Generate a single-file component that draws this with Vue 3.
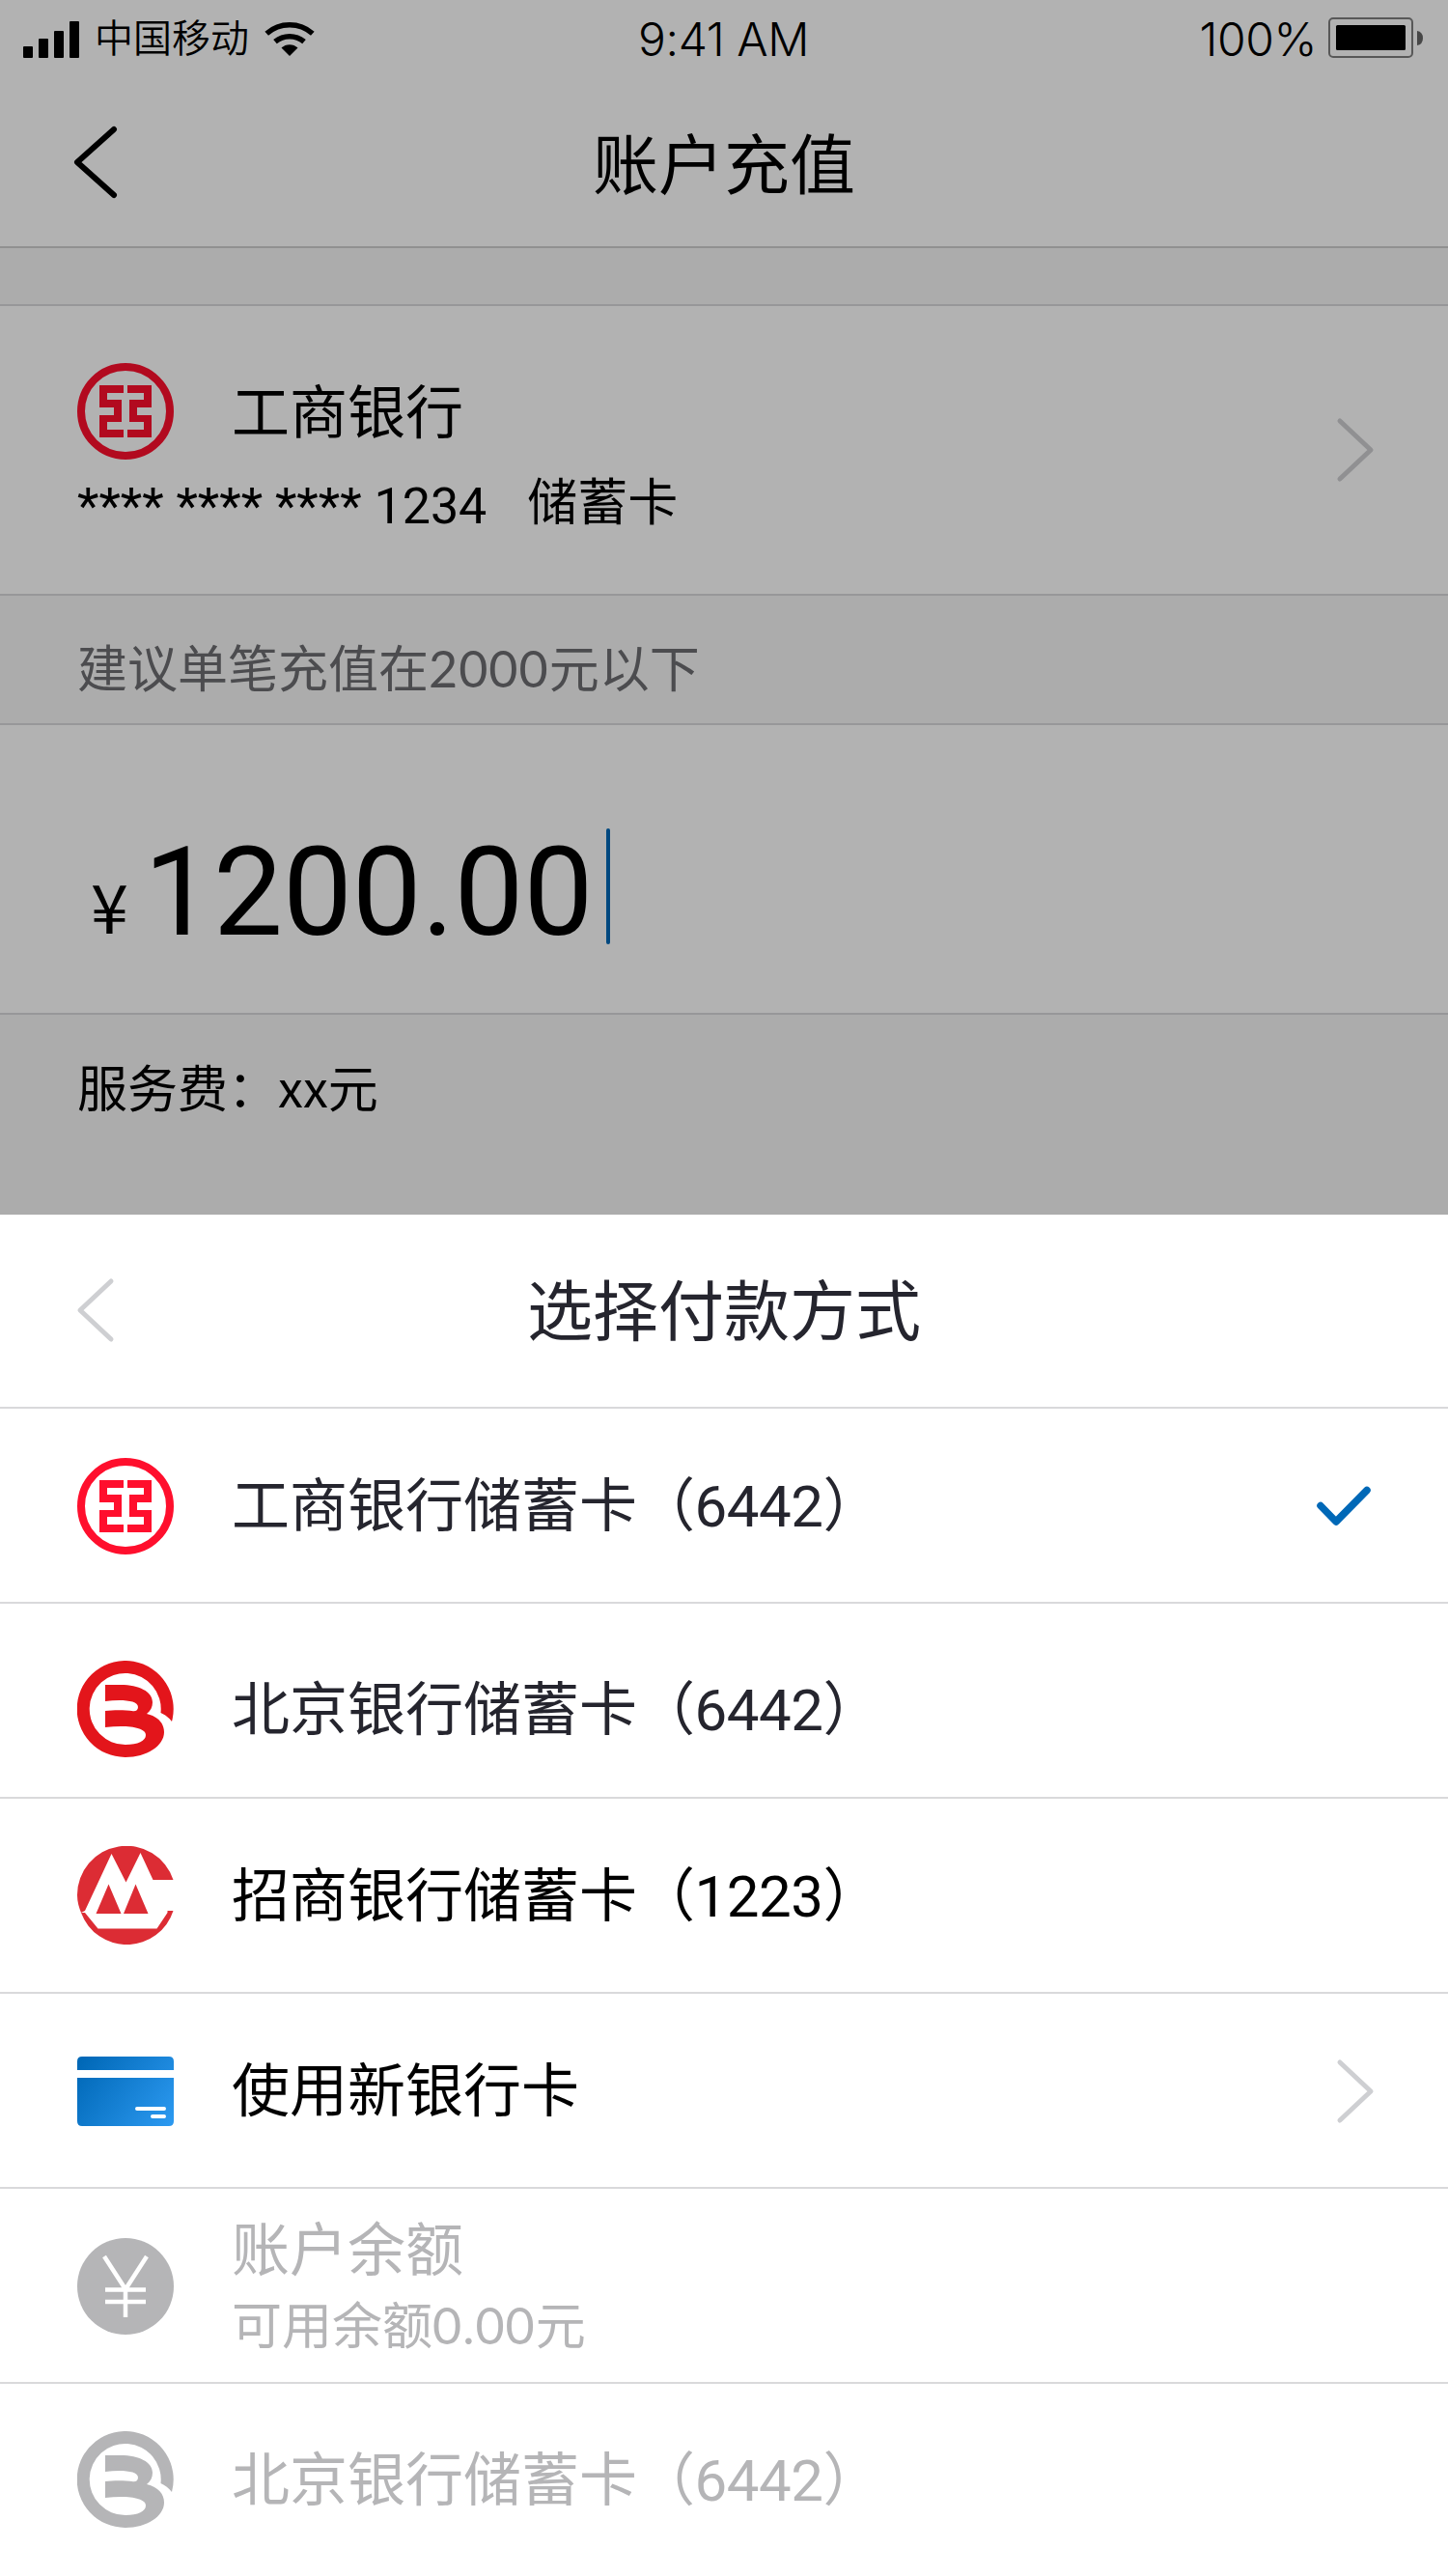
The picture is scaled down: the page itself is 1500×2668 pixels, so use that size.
<script setup>
const cards = [
  { id: 1, logo: 'icbc', name: '工商银行储蓄卡', tail: '6442', selected: true },
  { id: 2, logo: 'bob', name: '北京银行储蓄卡', tail: '6442', shifted: true },
  { id: 3, logo: 'cmb', name: '招商银行储蓄卡', tail: '1223', dark: true },
  { id: 4, logo: 'new', name: '使用新银行卡', dark: true, more: true },
  { id: 5, logo: 'balance', name: '账户余额', disabled: true, balance: '0.00' },
  { id: 6, logo: 'bob', name: '北京银行储蓄卡', tail: '6442', disabled: true },
]
</script>

<template>
  <div class="screen">
    <svg width="0" height="0" class="defs" aria-hidden="true">
      <symbol id="icbc" viewBox="0 0 100 100">
        <circle cx="50" cy="50" r="46" fill="none" stroke="currentColor" stroke-width="8" />
        <path fill="currentColor" d="M23 23H48V31H31V38H46V61H31V69H48V77H23V54H38V46H23ZM52 23H77V46H62V54H77V77H52V69H69V61H54V38H69V31H52Z" />
      </symbol>
      <symbol id="bob" viewBox="0 0 100 100">
        <path fill="currentColor" d="M98 63A50 50 0 1 0 50 100C72 100 90 88 90 74C90 65 84 58 72 55C76 52 78 48 78 43C78 32 64 25 45 25H29V42C46 40 63 41 63 48C63 51 61 52.500 58 52.300C50 51 38 51 29 52V69C50 66.500 71 68.500 71 77C71 83 63 87 50 87A37 37 0 1 1 86.500 54C91 56 95 59 98 63Z" />
      </symbol>
      <symbol id="cmb" viewBox="0 0 100 102">
        <path fill="currentColor" d="M99.500 35A51 51 0 0 0 0 51C0 58 2 64 4 69L8 67 35.500 8 50.500 37.500 65.500 7 78.500 35ZM32.500 39.500 19.500 70H45.500ZM60.500 39.500 48 70H73.500ZM8 69 4 69A50.500 50.500 0 0 0 99.500 67H93.500V69L82.500 85.500H21.500Z" />
      </symbol>
      <symbol id="new" viewBox="0 0 100 100">
        <defs>
          <linearGradient id="card-blue" gradientUnits="userSpaceOnUse" x1="4" y1="18" x2="96" y2="84">
            <stop offset="0" stop-color="#0068b7" />
            <stop offset="1" stop-color="#2b98ef" />
          </linearGradient>
        </defs>
        <path fill="url(#card-blue)" d="M0 28V19Q0 14 5 14H95Q100 14 100 19V28ZM0 36H100V81Q100 86 95 86H5Q0 86 0 81Z" />
        <path stroke="#fff" stroke-width="4" stroke-linecap="round" d="M62 68H90M78 76H90" />
      </symbol>
      <symbol id="balance" viewBox="0 0 100 100">
        <circle cx="50" cy="50" r="50" fill="currentColor" />
        <path fill="none" stroke="#fff" stroke-width="4.500" d="M28 19 50 53 72 19M50 51V82M29 53.500H71M29 66H71" />
      </symbol>
      <symbol id="chevron" viewBox="0 0 40 68">
        <path fill="none" stroke="currentColor" stroke-width="5" stroke-linecap="round" stroke-linejoin="round" d="M4 4 36 34 4 64" />
      </symbol>
    </svg>

    <div class="page">
      <div class="status">
        <div class="side">
          <svg class="signal" width="58" height="38" viewBox="0 0 58 38">
            <rect y="26" width="10" height="12" rx="1" />
            <rect x="16" y="18" width="10" height="20" rx="1" />
            <rect x="32" y="10" width="10" height="28" rx="1" />
            <rect x="48" width="10" height="38" rx="1" />
          </svg>
          <span class="carrier">中国移动</span>
          <svg class="wifi" width="52" height="36" viewBox="0 0 52 36">
            <path d="M2.200 12.800A36 36 0 0 1 49.800 12.800" fill="none" stroke="#000" stroke-width="5.500" />
            <path d="M11 21.200A23 23 0 0 1 41 21.200" fill="none" stroke="#000" stroke-width="5.500" />
            <path d="M26 36 17.500 27.500A12.500 12.500 0 0 1 34.500 27.500Z" />
          </svg>
        </div>
        <span class="time">9:41 AM</span>
        <div class="side right">
          <span class="percent">100%</span>
          <svg class="battery" width="99" height="42" viewBox="0 0 99 42">
            <rect x="1" y="1" width="86" height="40" rx="4" fill="none" stroke="#000" stroke-opacity=".5" stroke-width="2" />
            <rect x="8" y="8" width="72" height="26" rx="1.500" />
            <path d="M92 14Q98 15 98 21.500T92 29Z" fill-opacity=".6" />
          </svg>
        </div>
      </div>

      <header class="nav">
        <svg class="back" width="48" height="78" viewBox="0 0 48 78">
          <path d="M42 5 4 39 42 73" fill="none" stroke="#000" stroke-width="6" stroke-linecap="round" stroke-linejoin="round" />
        </svg>
        <h1>账户充值</h1>
      </header>

      <section class="account">
        <div>
          <div class="bank">
            <svg class="logo icbc"><use href="#icbc" /></svg>
            <span>工商银行</span>
          </div>
          <div class="number"><span class="digits">**** **** **** 1234</span><span class="kind">储蓄卡</span></div>
        </div>
        <svg class="chev"><use href="#chevron" /></svg>
      </section>

      <p class="tip">建议单笔充值在<span class="figures">2000</span>元以下</p>

      <section class="amount">
        <span class="yen">¥</span><span class="value">1200.00</span><i class="caret"></i>
      </section>

      <p class="fee">服务费：<span class="cjk">xx</span>元</p>
      <div class="mask"></div>
    </div>

    <div class="sheet">
      <div class="sheet-head">
        <svg class="chev flip"><use href="#chevron" /></svg>
        <h2>选择付款方式</h2>
      </div>
      <div
        v-for="c in cards"
        :key="c.id"
        class="row"
        :class="{ shifted: c.shifted, dark: c.dark, disabled: c.disabled, double: c.balance }"
      >
        <svg class="logo" :class="c.logo"><use :href="'#' + c.logo" /></svg>
        <div class="label">
          <span>{{ c.name }}<span v-if="c.tail" class="tail">（{{ c.tail }}）</span></span>
          <span v-if="c.balance" class="sub">可用余额<span class="figures">{{ c.balance }}</span>元</span>
        </div>
        <svg v-if="c.selected" class="check" width="60" height="46" viewBox="0 0 60 46">
          <path d="M4 22.500 20 39 52 6.500" fill="none" stroke="#0068b7" stroke-width="7.500" stroke-linecap="round" stroke-linejoin="round" />
        </svg>
        <svg v-if="c.more" class="chev"><use href="#chevron" /></svg>
      </div>
    </div>
  </div>
</template>

<style>
body {
  margin: 0;
  overflow: hidden;
}
</style>

<style scoped>
* {
  box-sizing: border-box;
}
.screen {
  width: 1500px;
  height: 2668px;
  overflow: hidden;
  background: #fff;
  color: #000;
  font-family: Roboto, "Noto Sans CJK SC", sans-serif;
  display: flex;
  flex-direction: column;
}
.defs {
  position: absolute;
}
svg {
  display: block;
  flex: none;
}
h1,
h2,
p {
  margin: 0;
  font-weight: 400;
}
.page {
  position: relative;
  height: 1258px;
  flex: none;
  background: #f7f7f7;
}
.mask {
  position: absolute;
  inset: 0;
  background: rgba(0, 0, 0, 0.3);
}
.status {
  height: 81px;
  padding: 0 25px 0 24px;
  background: #fff;
  display: flex;
  align-items: center;
}
.side {
  flex: 1;
  display: flex;
  align-items: center;
}
.right {
  justify-content: flex-end;
}
.carrier {
  margin-left: 16px;
  font-size: 40px;
  font-weight: 350;
  line-height: 60px;
}
.wifi {
  margin: 0 0 2px 16px;
}
.time,
.percent {
  font-family: Inter, sans-serif;
  font-size: 48px;
  font-weight: 350;
  line-height: 60px;
  letter-spacing: -0.4px;
}
.battery {
  margin: 0 0 3px 12px;
}
.nav {
  height: 176px;
  padding-left: 76px;
  background: #fff;
  border-bottom: 2px solid #cecece;
  display: flex;
  align-items: center;
}
.back {
  margin-right: -124px;
}
.nav h1 {
  width: 1500px;
  padding-top: 9px;
  text-align: center;
  font-size: 68px;
  line-height: 100px;
}
.account {
  height: 302px;
  margin-top: 58px;
  padding: 59px 76px 0 80px;
  background: #fff;
  border-top: 2px solid #d9d9db;
  border-bottom: 2px solid #d9d9db;
  display: flex;
  justify-content: space-between;
}
.bank {
  height: 100px;
  display: flex;
  align-items: center;
  font-size: 60px;
  line-height: 80px;
}
.bank span {
  padding-top: 6px;
}
.logo {
  width: 100px;
  height: 100px;
  margin-right: 60px;
}
.number {
  margin-top: 14px;
  display: flex;
  font-size: 52px;
  line-height: 70px;
}
.kind {
  margin: -3px 0 0 42px;
}
.chev {
  width: 40px;
  height: 68px;
  color: #cecfd2;
}
.account .chev {
  margin-top: 56px;
}
.tip {
  height: 132px;
  padding: 12px 80px;
  font-size: 52px;
  line-height: 132px;
  color: #6d6e71;
}
.cjk {
  font-family: "Noto Sans CJK SC", sans-serif;
  line-height: 1;
}
.figures {
  font-family: Lato, "Noto Sans CJK SC", sans-serif;
  line-height: 1;
  letter-spacing: 1px;
}
.amount {
  height: 302px;
  padding: 0 80px 0 94px;
  background: #fff;
  border-top: 2px solid #d9d9db;
  border-bottom: 2px solid #d9d9db;
  display: flex;
  align-items: flex-start;
}
.yen {
  width: 55px;
  padding-top: 159px;
  font-family: "Noto Sans CJK SC", sans-serif;
  font-size: 70px;
  line-height: 54px;
}
.value {
  padding-top: 97px;
  font-size: 128px;
  line-height: 152px;
}
.caret {
  width: 4px;
  height: 120px;
  margin: 107px 0 0 14px;
  border-radius: 2px;
  background: #0068b7;
}
.fee {
  padding: 39px 80px 0;
  font-size: 52px;
  line-height: 80px;
}
.sheet {
  color: #25252e;
}
.sheet-head,
.row {
  display: flex;
  align-items: center;
  padding: 0 76px 0 80px;
  border-bottom: 2px solid #d9d9db;
}
.sheet-head {
  height: 201px;
}
.sheet-head .chev {
  margin: 0 -119px 2px -1px;
}
.flip {
  transform: scaleX(-1);
}
.sheet-head h2 {
  flex: none;
  width: 1500px;
  padding-top: 5px;
  font-size: 68px;
  line-height: 100px;
  text-align: center;
}
.row {
  height: 202px;
  padding-top: 2px;
}
.row:last-child {
  padding-top: 0;
  padding-bottom: 2px;
  border-color: transparent;
}
.label {
  flex: 1;
  padding-top: 2px;
  display: flex;
  flex-direction: column;
  font-size: 60px;
  line-height: 80px;
}
.tail {
  letter-spacing: -0.5px;
}
.sub {
  margin-top: -1px;
  font-size: 52px;
}
.shifted {
  padding-top: 18px;
}
.shifted .label,
.row:last-child .label {
  padding-top: 4px;
}
.dark {
  color: #000;
}
.disabled {
  color: #b5b5b7;
}
.double .label {
  padding-top: 7px;
}
.icbc {
  color: #ff0f2d;
}
.bob {
  color: #e3151b;
}
.disabled .bob {
  color: inherit;
}
.cmb {
  height: 102px;
  margin-top: -2px;
  color: #dc2c34;
}
</style>
